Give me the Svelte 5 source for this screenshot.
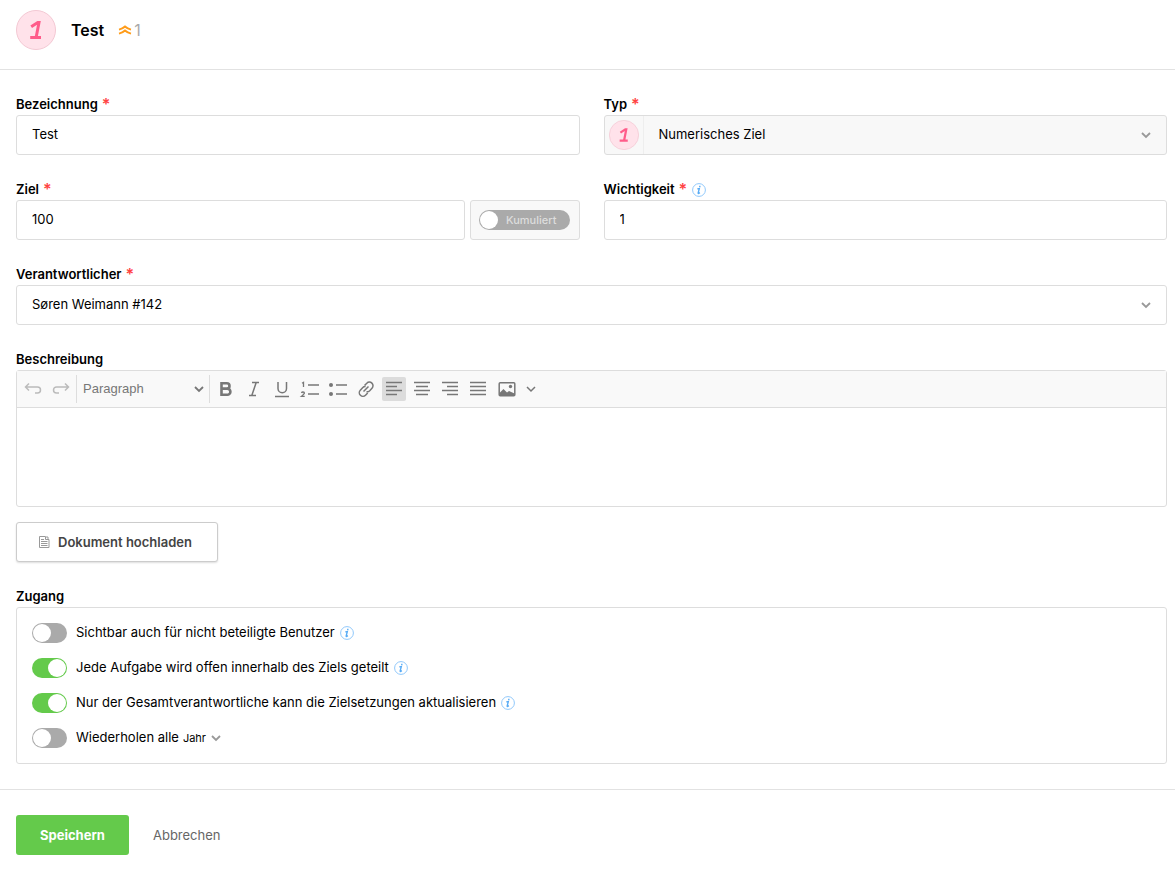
<script lang="ts">
    interface Access {
        id: string;
        label: string;
        checked: boolean;
    }

    let title = $state("Test");
    let target = $state("100");
    let weight = $state("1");
    let cumulated = $state(false);
    let repeat = $state(false);
    let align = $state("left");

    let access = $state<Access[]>([
        { id: "visible", label: "Sichtbar auch für nicht beteiligte Benutzer", checked: false },
        { id: "shared", label: "Jede Aufgabe wird offen innerhalb des Ziels geteilt", checked: true },
        { id: "owner", label: "Nur der Gesamtverantwortliche kann die Zielsetzungen aktualisieren", checked: true },
    ]);

    // line ends per alignment, drawn on a 24px grid
    const alignments = [
        { name: "left", d: "M4 5.500h16M4 9.500h11M4 13.500h16M4 17.500h11" },
        { name: "center", d: "M4 5.500h16M6 9.500h12M4 13.500h16M6 17.500h12" },
        { name: "right", d: "M4 5.500h16M9 9.500h11M4 13.500h16M9 17.500h11" },
        { name: "justify", d: "M4 5.500h16M4 9.500h16M4 13.500h16M4 17.500h16" },
    ];
</script>

{#snippet required()}<span class="required">*</span>{/snippet}

{#snippet chevron()}
    <svg class="chevron" viewBox="0 0 10 8" aria-hidden="true"><path d="M1 2l4 4 4-4" /></svg>
{/snippet}

{#snippet info()}
    <svg class="info" viewBox="0 0 14 14" aria-hidden="true">
        <circle cx="7" cy="7" r="6.400" />
        <path d="M5.300 5.900l2-.3-1.100 4.300q-.1.800.5.500l1.200-.7" />
        <path class="dot" d="M7.100 3.500h1.400" />
    </svg>
{/snippet}

{#snippet goal()}
    <svg class="goal" viewBox="0 0 40 40" aria-hidden="true">
        <circle cx="20" cy="20" r="19.500" />
        <path d="M15.200 16.800l6.600-4.300h1.200l-2.800 14.500M14.200 27.500h10.800" />
    </svg>
{/snippet}

<header class="header">
    {@render goal()}
    <h1 class="title">{title}</h1>
    <span class="priority">
        <svg viewBox="0 0 14 10" aria-hidden="true"><path d="M1 4.600Q4.500 3.800 7 1.500 9.500 3.800 13 4.600M1 8.600Q4.500 7.800 7 5.500 9.500 7.800 13 8.600" /></svg>
        {weight}
    </span>
</header>

<form class="form" onsubmit={(e) => e.preventDefault()}>
    <main class="fields">
        <div class="columns">
            <div class="field">
                <label class="label" for="title">Bezeichnung {@render required()}</label>
                <input id="title" class="control" type="text" bind:value={title} />
            </div>
            <div class="field">
                <label class="label" for="type">Typ {@render required()}</label>
                <div class="type-row">
                    <span class="type-icon">{@render goal()}</span>
                    <div class="select">
                        <select id="type"><option>Numerisches Ziel</option></select>
                        {@render chevron()}
                    </div>
                </div>
            </div>
            <div class="field">
                <label class="label" for="target">Ziel {@render required()}</label>
                <div class="target-row">
                    <input id="target" class="control" type="text" bind:value={target} />
                    <div class="cumulated">
                        <label class="cumulated-label">
                            <input class="toggle wide" type="checkbox" bind:checked={cumulated} />
                            <span>Kumuliert</span>
                        </label>
                    </div>
                </div>
            </div>
            <div class="field">
                <label class="label" for="weight">Wichtigkeit {@render required()}{@render info()}</label>
                <input id="weight" class="control" type="text" bind:value={weight} />
            </div>
        </div>

        <div class="field">
            <label class="label" for="owner-select">Verantwortlicher {@render required()}</label>
            <div class="select boxed">
                <select id="owner-select"><option>Søren Weimann #142</option></select>
                {@render chevron()}
            </div>
        </div>

        <div class="field">
            <label class="label" for="description">Beschreibung</label>
            <div class="editor">
                <div class="toolbar">
                    <div class="group history">
                        <button type="button" class="tool" aria-label="Rückgängig" disabled>
                            <svg viewBox="0 0 24 24"><path d="M8 6.500L4.500 10 8 13.500M4.800 10H16.500a3 3 0 0 1 0 6H14" /></svg>
                        </button>
                        <button type="button" class="tool" aria-label="Wiederholen" disabled>
                            <svg viewBox="0 0 24 24"><path d="M16 6.500l3.500 3.500-3.500 3.500M19.200 10H7.500a3 3 0 0 0 0 6H10" /></svg>
                        </button>
                    </div>
                    <div class="select paragraph">
                        <select aria-label="Format"><option>Paragraph</option></select>
                        {@render chevron()}
                    </div>
                    <div class="group">
                        <button type="button" class="tool" aria-label="Fett">
                            <svg viewBox="0 0 24 24"><path class="bold" d="M7.500 6.200h5.300a2.700 2.700 0 0 1 0 5.400H7.500zM7.500 11.600h5.800a3.100 3.100 0 0 1 0 6.200H7.500z" /></svg>
                        </button>
                        <button type="button" class="tool" aria-label="Kursiv">
                            <svg viewBox="0 0 24 24"><path d="M10 5.500h7M7 18.500h7M14.200 5.500l-4.400 13" /></svg>
                        </button>
                        <button type="button" class="tool" aria-label="Unterstrichen">
                            <svg viewBox="0 0 24 24"><path d="M8 5v6.500a4 4 0 0 0 8.500 0V5M5 19.500h14" /></svg>
                        </button>
                        <button type="button" class="tool" aria-label="Nummerierte Liste">
                            <svg viewBox="0 0 24 24"><path d="M10 8h11M10 17h11" /><path class="thin" d="M4 6.200l1.500-.9v4.700M3.500 16q.3-1 1.500-1 1.400 0 1.400 1 0 .8-3 3.400h3.300" /></svg>
                        </button>
                        <button type="button" class="tool" aria-label="Liste">
                            <svg viewBox="0 0 24 24"><path d="M10 8h11M10 17h11" /><circle cx="5" cy="8" r="2" /><circle cx="5" cy="17" r="2" /></svg>
                        </button>
                        <button type="button" class="tool" aria-label="Link">
                            <svg viewBox="0 0 24 24"><path d="M9.500 14.500l5-5M10.500 8.500l2.300-2.300a3.600 3.600 0 0 1 5.200 5l-2.300 2.500a3.600 3.600 0 0 1-3.200 1M13.700 16l-2.200 2.200a3.600 3.600 0 0 1-5.200-5l2.300-2.500a3.600 3.600 0 0 1 3-1.100" /></svg>
                        </button>
                        {#each alignments as item}
                            <button type="button" class="tool" class:active={align === item.name} aria-label={item.name} onclick={() => (align = item.name)}>
                                <svg viewBox="0 0 24 24"><path d={item.d} /></svg>
                            </button>
                        {/each}
                    </div>
                    <div class="group image">
                        <button type="button" class="tool" aria-label="Bild">
                            <svg viewBox="0 0 24 24"><rect x="4.200" y="5.700" width="15.600" height="13" rx="1" /><path class="fill" d="M4.500 16l4-4 3.500 3.500 2-1.500 5.500 2.500v2h-15z" /><circle cx="15.500" cy="9.500" r="1.700" /></svg>
                        </button>
                        <button type="button" class="tool" aria-label="Mehr">{@render chevron()}</button>
                    </div>
                </div>
                <textarea id="description"></textarea>
            </div>
            <button type="button" class="upload">
                <svg viewBox="0 0 12 14" aria-hidden="true"><path class="sheet" d="M1.500 1.500h6v3h3.500v8H1.500z" /><path d="M9 1v2h2M3 4.500h3M3 6.500h6.500M3 8.500h6.500M3 10.500h6.500" /></svg>
                Dokument hochladen
            </button>
        </div>

        <fieldset class="field">
            <legend class="label">Zugang</legend>
            <div class="access">
                {#each access as item (item.id)}
                    <div class="access-row">
                        <input id={item.id} class="toggle" type="checkbox" bind:checked={item.checked} />
                        <label for={item.id}>{item.label}</label>
                        {@render info()}
                    </div>
                {/each}
                <div class="access-row">
                    <input id="repeat" class="toggle" type="checkbox" bind:checked={repeat} />
                    <label for="repeat">Wiederholen alle</label>
                    <div class="select interval">
                        <select aria-label="Intervall"><option>Jahr</option></select>
                        {@render chevron()}
                    </div>
                </div>
            </div>
        </fieldset>
    </main>

    <footer class="footer">
        <button type="submit" class="save">Speichern</button>
        <button type="button" class="cancel">Abbrechen</button>
    </footer>
</form>

<style>
    :global(body) {
        margin: 0;
        background: #fff;
        color: #000;
        font: 400 13px/20px Inter, "Liberation Sans", sans-serif;
    }

    input, select, textarea, button {
        box-sizing: border-box;
        margin: 0;
        font: inherit;
        color: inherit;
    }

    button, select {
        cursor: pointer;
    }

    svg {
        flex: none;
        fill: none;
        stroke: currentColor;
    }

    .header {
        display: flex;
        align-items: center;
        padding: 10px 16px 19px;
        border-bottom: 1px solid #e2e2e2;
    }

    .goal {
        display: block;
        width: 40px;
        height: 40px;
    }

    .goal circle {
        fill: #ffe2ea;
        stroke: #f3c8d3;
    }

    .goal path {
        stroke: #ff5c8a;
        stroke-width: 3;
    }

    .title {
        margin: 0 14px 0 15px;
        font-size: 16px;
        font-weight: 600;
    }

    .priority {
        display: flex;
        align-items: center;
        gap: 2px;
        color: #aaa;
        font-size: 16px;
    }

    .priority svg {
        width: 14px;
        height: 10px;
        stroke: #ff9c1a;
        stroke-width: 2;
    }

    .fields {
        display: flex;
        flex-direction: column;
        gap: 25px;
        padding: 25px 8px 25px 16px;
    }

    .columns {
        display: grid;
        grid-template-columns: 1fr 1fr;
        gap: 25px 24px;
    }

    .field {
        min-width: 0;
        margin: 0;
        padding: 0;
        border: 0;
    }

    .label {
        display: flex;
        height: 20px;
        padding: 0;
        font-weight: 600;
        line-height: 18px;
    }

    .required {
        margin-left: 4px;
        color: #ff4343;
        font-size: 16px;
    }

    .info {
        width: 14px;
        height: 14px;
        margin: 3px 0 0 5px;
        color: #57abf5;
        stroke-width: 1.4;
    }

    .info circle {
        stroke: #90c8fb;
        stroke-width: 1;
    }

    .info .dot {
        stroke-width: 1.6;
    }

    .control, .boxed, .type-row, .cumulated {
        box-sizing: border-box;
        width: 100%;
        height: 40px;
        border: 1px solid #ddd;
        border-radius: 3px;
        background: #fff;
    }

    .control {
        padding: 0 15px 2px;
    }

    .select {
        display: grid;
        flex: 1;
        align-items: center;
    }

    .select > :global(*) {
        grid-area: 1 / 1;
    }

    .select select {
        width: 100%;
        height: 38px;
        padding: 0 30px 2px 15px;
        border: 0;
        background: none;
        appearance: none;
    }

    .chevron {
        justify-self: end;
        width: 10px;
        height: 8px;
        margin-right: 15px;
        color: #999;
        stroke-width: 1.8;
        pointer-events: none;
    }

    .type-row {
        display: flex;
        background: #f8f8f8;
    }

    .type-icon {
        padding: 4px;
        border-right: 1px solid #eee;
    }

    .type-icon .goal {
        width: 30px;
        height: 30px;
    }

    .target-row {
        display: flex;
        gap: 5px;
    }

    .target-row .control {
        flex: 1;
        min-width: 0;
    }

    .cumulated {
        display: grid;
        place-items: center;
        width: 110px;
        background: #f8f8f8;
    }

    .cumulated-label {
        display: grid;
        align-items: center;
        color: #ddd;
        font-size: 11px;
        font-weight: 500;
    }

    .cumulated-label > * {
        grid-area: 1 / 1;
    }

    .cumulated-label span {
        padding-left: 27px;
    }

    .toggle {
        flex: none;
        display: flex;
        width: 35px;
        height: 20px;
        padding: 1px;
        border-radius: 10px;
        background: #aaa;
        appearance: none;
        cursor: pointer;
    }

    .toggle::before {
        content: "";
        width: 18px;
        height: 18px;
        border-radius: 50%;
        background: #fff;
    }

    .toggle:checked {
        justify-content: flex-end;
        background: #64ca4b;
    }

    .toggle.wide {
        width: 91px;
    }

    .editor {
        border: 1px solid #ddd;
        border-radius: 3px;
    }

    .toolbar {
        display: flex;
        align-items: center;
        height: 36px;
        border-bottom: 1px solid #ddd;
        background: #f9f9f9;
        color: #777;
    }

    .group {
        display: flex;
        gap: 4px;
        padding-left: 4px;
    }

    .group.history {
        padding-right: 3px;
    }

    .group.image {
        gap: 0;
        padding-left: 5px;
    }

    .tool {
        display: grid;
        place-items: center;
        width: 24px;
        height: 24px;
        padding: 0;
        border: 0;
        border-radius: 2px;
        background: none;
    }

    .tool svg {
        width: 24px;
        height: 24px;
        stroke-width: 1.5;
    }

    .tool:disabled {
        color: #bbb;
    }

    .tool.active {
        background: #dcdcdc;
    }

    .tool .bold {
        stroke-width: 2.6;
    }

    .tool .thin {
        stroke-width: 1.3;
    }

    .tool circle, .tool .fill {
        fill: currentColor;
        stroke: none;
    }

    .tool .chevron {
        justify-self: center;
        width: 10px;
        height: 8px;
        margin: 0;
        color: #777;
    }

    .paragraph {
        flex: none;
        width: 132px;
        border: solid #ddd;
        border-width: 0 1px;
    }

    .paragraph select {
        height: 28px;
        padding: 0 20px 0 6px;
        font-family: "Liberation Sans", sans-serif;
    }

    .paragraph .chevron {
        margin-right: 5px;
        color: #777;
    }

    textarea {
        display: block;
        width: 100%;
        height: 98px;
        padding: 10px 15px;
        border: 0;
        background: none;
        resize: none;
    }

    .upload {
        display: flex;
        align-items: center;
        gap: 8px;
        height: 40px;
        margin-top: 15px;
        padding: 0 25px 0 21px;
        border: 1px solid #ccc;
        border-radius: 3px;
        background: #fff;
        box-shadow: 0 1px 2px #0002;
        color: #444;
        font-weight: 600;
    }

    .upload svg {
        width: 12px;
        height: 14px;
        color: #999;
    }

    .access {
        padding: 7px 15px 8px;
        border: 1px solid #ddd;
        border-radius: 3px;
    }

    .access-row {
        display: flex;
        align-items: center;
        height: 35px;
    }

    .access-row label {
        padding: 0 0 1px 9px;
    }

    .access-row .info {
        margin-top: 0;
    }

    .interval {
        flex: none;
        margin-left: 4px;
        font-size: 11px;
    }

    .interval select {
        height: 20px;
        padding: 0 14px 0 0;
    }

    .interval .chevron {
        margin: 0;
    }

    .footer {
        display: flex;
        padding: 25px 16px 15px;
        border-top: 1px solid #e2e2e2;
    }

    .save, .cancel {
        height: 40px;
        padding: 0 24px;
        border: 0;
        border-radius: 3px;
        background: none;
    }

    .save {
        background: #64ca4b;
        color: #fff;
        font-weight: 700;
    }

    .cancel {
        color: #666;
    }
</style>
